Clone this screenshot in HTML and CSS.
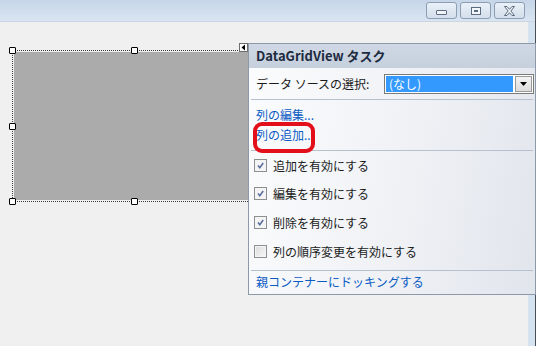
FILE: index.html
```html
<!DOCTYPE html>
<html lang="ja">
<head>
  <meta charset="UTF-8" />
  <title>DataGridView タスク</title>
  <link rel="stylesheet" href="styles.css">
</head>
<body>

  <div class="window">
    <div class="titlebar">
      <div class="win-buttons">
        <span class="win-btn"><i class="ico-min"></i></span>
        <span class="win-btn"><i class="ico-max"></i></span>
        <span class="win-btn">
          <svg width="13" height="10" viewBox="0 0 13 10">
            <path d="M1.5 0.5h2.5l2.5 2.8 2.5-2.8h2.5l-3.6 4.5 3.6 4.5h-2.5l-2.5-2.8-2.5 2.8h-2.5l3.6-4.5z" fill="#eef2f7" stroke="#5c6b80" stroke-width="1"/>
          </svg>
        </span>
      </div>
    </div>

    <div class="frame">
      <div class="client">
        <div class="designer">
          <div class="grid-select">
            <div class="grid-body"></div>
            <span class="handle h-tl"></span>
            <span class="handle h-tm"></span>
            <span class="handle h-ml"></span>
            <span class="handle h-bl"></span>
            <span class="handle h-bm"></span>
          </div>
          <span class="smart-tag">
            <svg width="7" height="7" viewBox="0 0 7 7"><path d="M5 0.5v6l-3.5-3z" fill="#000"/></svg>
          </span>
        </div>
      </div>
      <div class="frame-edge"></div>
    </div>
  </div>

  <!-- smart tag popup -->
  <div class="tasks">
    <div class="tasks-header">DataGridView タスク</div>
    <div class="tasks-body">
      <div class="row-combo">
        <span class="label">データ ソースの選択:</span>
        <div class="combo">
          <span class="combo-value">(なし)</span>
          <span class="combo-btn">
            <svg width="7" height="4" viewBox="0 0 7 4"><path d="M0 0h7l-3.5 4z" fill="#000"/></svg>
          </span>
        </div>
      </div>
      <div class="sep"></div>
      <div class="links">
        <a class="task-link">列の編集...</a>
        <a class="task-link">列の追加...</a>
      </div>
      <div class="sep"></div>
      <div class="checks">
        <label class="check-row"><span class="cbox checked"></span>追加を有効にする</label>
        <label class="check-row"><span class="cbox checked"></span>編集を有効にする</label>
        <label class="check-row"><span class="cbox checked"></span>削除を有効にする</label>
        <label class="check-row"><span class="cbox"></span>列の順序変更を有効にする</label>
      </div>
      <div class="sep"></div>
      <a class="task-link dock">親コンテナーにドッキングする</a>
    </div>
    <div class="highlight"></div>
  </div>

</body>
</html>
```

FILE: styles.css
```css
:root {
  --client-bg: #f0f0f0;
  --frame-blue: #d5e2f0;
  --link: #0a5bc4;
  --panel-border: #8d98a9;
  --sep: #b7c0cd;
  --font: "Noto Sans CJK JP", "Noto Sans", sans-serif;
}

* { box-sizing: border-box; margin: 0; padding: 0; }

body {
  width: 547px;
  height: 346px;
  background: #ffffff;
  font-family: var(--font);
  font-size: 12px;
  color: #1b1b1b;
  position: relative;
  overflow: hidden;
}

.window {
  width: 536px;
  height: 346px;
  display: flex;
  flex-direction: column;
  border-right: 1px solid #4b4f55;
}

.titlebar {
  height: 22px;
  background: linear-gradient(to bottom, #c6d6e8, #d9e5f1);
  border-bottom: 1px solid #cad6e3;
  display: flex;
  justify-content: flex-end;
  padding: 2px 10px 0 0;
}

.win-buttons { display: flex; gap: 3px; height: 17px; }

.win-btn {
  width: 31px;
  height: 17px;
  border: 1px solid #8d9db3;
  border-radius: 3px;
  background: linear-gradient(to bottom, #eaf0f7, #d3dfec);
  display: flex;
  align-items: center;
  justify-content: center;
}

.ico-min {
  width: 11px;
  height: 5px;
  margin-top: 4px;
  border: 1px solid #5c6b80;
  background: #f2f5f9;
  border-radius: 1px;
}

.ico-max {
  width: 10px;
  height: 8px;
  border: 1px solid #5c6b80;
  background: #f2f5f9;
  box-shadow: inset 0 0 0 2px #f2f5f9, inset 0 0 0 3px #5c6b80;
}

.frame { flex: 1; display: flex; }

.client {
  flex: 1;
  background: var(--client-bg);
  position: relative;
}

.frame-edge { width: 7px; background: var(--frame-blue); }

/* design surface */
.designer { position: relative; height: 100%; }

.grid-select {
  position: absolute;
  left: 12px;
  top: 28px;
  width: 244px;
  height: 152px;
  border: 1px dotted #3a3a3a;
  padding: 1px;
}

.grid-body { width: 100%; height: 100%; background: #ababab; }

.handle {
  position: absolute;
  width: 7px;
  height: 7px;
  background: #ffffff;
  border: 1px solid #000000;
  border-radius: 1px;
}
.h-tl { left: -4px; top: -4px; }
.h-tm { left: 118px; top: -4px; }
.h-ml { left: -4px; top: 72px; }
.h-bl { left: -4px; bottom: -4px; }
.h-bm { left: 118px; bottom: -4px; }

.smart-tag {
  position: absolute;
  left: 239px;
  top: 21px;
  width: 9px;
  height: 9px;
  background: #ffffff;
  border: 1px solid #6d6d6d;
  display: flex;
  align-items: center;
  justify-content: center;
}

/* tasks popup */
.tasks {
  position: absolute;
  left: 248px;
  top: 43px;
  width: 288px;
  height: 252px;
  border: 1px solid var(--panel-border);
  background: linear-gradient(100deg, #fbfcfd 0%, #eff1f5 55%, #e1e5ec 100%);
  display: flex;
  flex-direction: column;
}

.tasks-header {
  height: 24px;
  background: linear-gradient(to bottom, #cfd8e4, #c6d0dd);
  font-size: 13px;
  font-weight: 700;
  color: #1d2a3f;
  line-height: 24px;
  padding-left: 7px;
}

.tasks-body { flex: 1; display: flex; flex-direction: column; padding: 0 1px; }

.row-combo {
  height: 31px;
  display: flex;
  align-items: center;
  padding-left: 6px;
}

.label { width: 128px; }

.combo {
  width: 150px;
  height: 20px;
  border: 1px solid #7a7a7a;
  background: #ffffff;
  padding: 1px;
  display: flex;
  margin-top: 1px;
}

.combo-value {
  flex: 1;
  background: #3399ff;
  color: #ffffff;
  line-height: 16px;
  padding-left: 3px;
}

.combo-btn {
  width: 17px;
  margin-left: 2px;
  border: 1px solid #9a9a9a;
  background: linear-gradient(to bottom, #f4f4f4, #dcdcdc);
  display: flex;
  align-items: center;
  justify-content: center;
}

.sep { height: 1px; background: var(--sep); margin: 0 1px; }

.links { display: flex; flex-direction: column; padding: 5px 0 5px 6px; }

.task-link {
  color: var(--link);
  line-height: 20px;
  height: 20px;
  cursor: pointer;
}

.checks { display: flex; flex-direction: column; padding: 0 0 4px 4px; }

.check-row { height: 29px; display: flex; align-items: center; gap: 6px; }
.check-row:first-child { height: 28px; }

.cbox {
  width: 13px;
  height: 13px;
  border: 1px solid #8e8f8f;
  background: linear-gradient(135deg, #dcdcdc, #f8f8f8);
  box-shadow: inset 0 0 0 1px #f4f4f4;
}

.cbox.checked {
  background: #f4f4f4 url("data:image/svg+xml,%3Csvg xmlns='http://www.w3.org/2000/svg' width='11' height='11' viewBox='0 0 11 11'%3E%3Cpath d='M3 5.5l1.8 2.2 3.4-4.7' fill='none' stroke='%23596c9e' stroke-width='1.5'/%3E%3C/svg%3E") center / 11px 11px no-repeat;
}

.dock { padding-left: 6px; margin-top: 1px; }

.highlight {
  position: absolute;
  left: 4px;
  top: 78px;
  width: 62px;
  height: 31px;
  border: 4px solid #e3101c;
  border-radius: 9px;
}
```
